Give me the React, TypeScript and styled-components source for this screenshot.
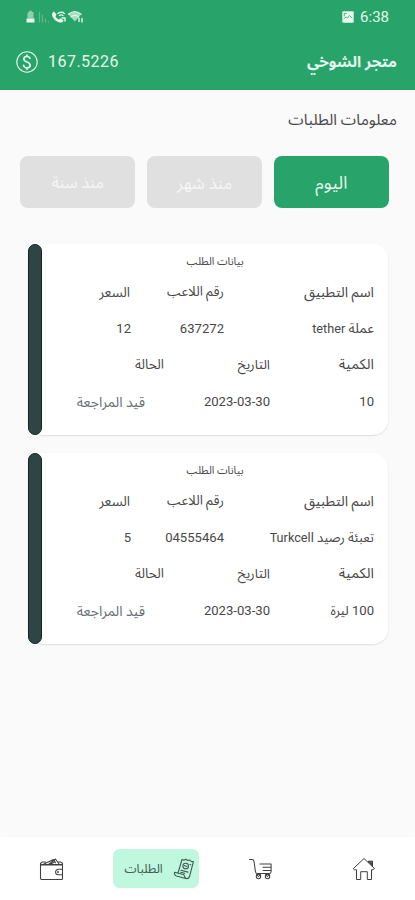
import React from 'react';
import styled, { createGlobalStyle } from 'styled-components';

const Global = createGlobalStyle`
  * { box-sizing: border-box; }
  body { margin: 0; background: #fafafa; }
`;

const Screen = styled.div`
  width: 415px;
  height: 900px;
  display: flex;
  flex-direction: column;
  overflow: hidden;
  background: #fafafa;
  color: #484848;
  font-family: Roboto, "Noto Sans Arabic", sans-serif;
`;

const Header = styled.header`
  height: 90px;
  background: #28a46a;
  color: #e4f7ec;
`;

const StatusBar = styled.div`
  height: 33px;
  display: flex;
  align-items: center;
  justify-content: space-between;
  padding: 0 26px 0 25px;
`;

const StatusGroup = styled.div`
  display: flex;
  align-items: center;
  gap: 6px;
`;

const Clock = styled.span`
  font-size: 15px;
  line-height: 18px;
`;

const AppBar = styled.div`
  height: 57px;
  display: flex;
  align-items: center;
  justify-content: space-between;
  padding: 0 18px 0 15px;
`;

const Balance = styled.div`
  display: flex;
  align-items: center;
  gap: 9px;
  font-size: 16px;
  letter-spacing: 0.48px;
`;

const StoreName = styled.h1`
  margin: 0;
  font-size: 15.3px;
  line-height: 24px;
  font-weight: 700;
`;

const Main = styled.main`
  flex: 1;
  direction: rtl;
`;

const SectionTitle = styled.h2`
  margin: 0;
  height: 66px;
  padding: 15px 18px 0;
  font-size: 15.5px;
  line-height: 30px;
  font-weight: 400;
`;

const Tabs = styled.div`
  display: flex;
  gap: 11.5px;
  padding: 0 26px;
`;

const Tab = styled.button<{ $active?: boolean; $size: number }>`
  flex: none;
  width: 115.3px;
  height: 52px;
  padding: 2px 0 0;
  border: 0;
  border-radius: 8px;
  background: ${(p) => (p.$active ? '#28a46a' : '#e0e0e0')};
  color: ${(p) => (p.$active ? '#e6f7ed' : '#f6f6f6')};
  font-family: inherit;
  font-size: ${(p) => p.$size}px;
`;

const CardList = styled.div`
  display: flex;
  flex-direction: column;
  gap: 18px;
  padding: 36px 27px 0 28px;
`;

const Card = styled.article`
  height: 191px;
  display: flex;
  border-radius: 15px;
  background: #fff;
  box-shadow: 0 1px 2px rgba(0, 0, 0, 0.11);
`;

const CardBody = styled.div`
  flex: 1;
`;

const Stripe = styled.div`
  width: 14px;
  border-radius: 7px;
  border: 1.5px solid #142625;
  background: #2f4543;
`;

const CardTitle = styled.h3`
  margin: 0;
  height: 30px;
  padding-top: 1px;
  font-size: 10.7px;
  line-height: 33px;
  font-weight: 400;
  text-align: center;
`;

const Row = styled.div<{ $columns: string }>`
  display: grid;
  grid-template-columns: ${(p) => p.$columns};
  height: 36.5px;
  padding-right: 14px;
  align-items: center;
`;

const Cell = styled.span<{ $size?: number; $light?: boolean }>`
  white-space: nowrap;
  line-height: 20px;
  font-size: ${(p) => p.$size ?? 13.1}px;
  color: ${(p) => (p.$light ? '#667074' : 'inherit')};
`;

const Latin = styled.span`
  font-size: 12.7px;
`;

const BottomNav = styled.nav`
  height: 63px;
  direction: rtl;
  display: grid;
  grid-template-columns: 103px 103px 107px 102px;
  align-items: center;
  justify-items: center;
  background: #fff;
  box-shadow: 0 -1px 4px rgba(0, 0, 0, 0.01);
`;

const NavItem = styled.a`
  display: flex;
  color: #3f3f3f;
`;

const ActiveItem = styled.a`
  width: 86px;
  height: 39px;
  display: flex;
  align-items: center;
  justify-content: space-between;
  padding: 0 4px 0 12px;
  border-radius: 7px;
  background: #bff7df;
  color: #40594f;
  font-size: 12.2px;
`;

const Icon = styled.svg`
  display: block;
  fill: none;
  stroke: currentColor;
  stroke-linecap: round;
  stroke-linejoin: round;
`;

const StatusIcons = () => (
  <Icon width="60" height="14" viewBox="0 0 60 14">
    <path d="M3 2h1.200V.8h2.600V2H8.500v6.500h-6V4z" fill="#8fcfac" stroke="none" />
    <path d="M1.500 8.500h8v4h-8z" fill="#e9f8ef" stroke="none" />
    <path d="M14.500 2v10M17.500 5v7M20.500 9v3M23.500 11.500v.5" stroke="#5fba8a" strokeWidth="1.200" />
    <path d="M29 1.500l2.500 3-1 1.800c.8 1.700 1.900 2.700 3.500 3.300l1.600-1.400 3 2.300c-.8 1.800-2 2.400-4 1.900-4-1-7.200-4.200-7.500-7.900 0-1.500.8-2.500 1.900-3z" fill="#e9f8ef" stroke="none" />
    <path d="M33 3.500c2-1.600 4.500-1.600 6.500 0M34.500 5.500c1.200-.8 2.400-.8 3.500 0M37 8h3v3" strokeWidth="1.400" />
    <path d="M43.500 4.500c4-3.500 8.500-3.500 12.500 0l-6.200 7z" fill="#a9dcc0" stroke="none" />
    <path d="M43.500 4.300c4-3.300 8.500-3.300 12.500 0M46 6.800c2.500-2 5-2 7.300 0" strokeWidth="1.200" />
    <path d="M54 8v3.500M57 8.500V12" strokeWidth="1.400" />
  </Icon>
);

const PictureIcon = () => (
  <Icon width="12" height="12" viewBox="0 0 12 12">
    <rect x=".3" y=".3" width="11.400" height="11.400" rx="1" fill="#e9f8ef" stroke="none" />
    <path d="M2 7.500l2-1.500 1.500 1L7.500 4.500 10 7M2.300 2.500v2.500M2.300 2.500h2" stroke="#55b685" strokeWidth="1" />
  </Icon>
);

const DollarIcon = () => (
  <Icon width="24" height="24" viewBox="0 0 24 24">
    <circle cx="12" cy="12" r="10.200" strokeWidth="1.100" />
    <path d="M15 8.300c-.5-1.300-1.600-2-3.100-2-1.900 0-3 1-3 2.700 0 3.700 6.300 2.200 6.300 6 0 1.800-1.400 2.900-3.200 2.900s-3-.9-3.400-2.500M12 5v1.300M12 17.900v1.300" strokeWidth="1.700" />
  </Icon>
);

const HomeIcon = () => (
  <Icon width="24" height="24" viewBox="0 0 24 24" strokeWidth="1">
    <path d="M1.500 11.500L12 1.500l10.500 10-1.500 1.300h-1.500v9.700h-4.200v-7.800H8.700v7.800H4.500v-9.700H3z" />
    <path d="M16.500 5.500V4.200h4v5.300" />
    <path d="M17.200 4.500l3 3.500M20 4.500v4" strokeWidth="1.400" />
  </Icon>
);

const CartIcon = () => (
  <Icon width="25" height="24" viewBox="0 0 25 24" strokeWidth="1.050">
    <path d="M1.500 2.500h2.300c1.200 0 2 .7 2.200 1.800L7.500 15c.2 1 .8 1.500 1.800 1.500h12c1 0 1.700-.7 1.800-1.700V7H12M15 10.300h8M15 13.500h8" />
    <circle cx="10.500" cy="19.500" r="2.200" />
    <circle cx="19.500" cy="19.500" r="2.200" />
    <path d="M8.500 17.500l2 2 2-2M17.500 17.500l2 2 2-2" />
  </Icon>
);

const WalletIcon = () => (
  <Icon width="25" height="24" viewBox="0 0 25 24" strokeWidth="1.050">
    <rect x="1.500" y="7.500" width="22" height="15" rx="1" />
    <path d="M1.500 8V6.200l2-1.200h3M23.500 8V6.200l-2-1.200h-2M4.500 7.300L14.500 2.500l2 3.300M9.500 7.500l7-5.500 3.500 5M12 7l4-2.500" />
    <path d="M23.500 12.300h-4.200a2.700 2.700 0 0 0 0 5.400h4.200" />
    <path d="M2 7.700h21M19 14.500v1" strokeWidth="1.500" />
  </Icon>
);

const ReceiptIcon = () => (
  <Icon width="22" height="24" viewBox="0 0 22 24" strokeWidth="1.100">
    <path d="M9 2.500l1.900.8 1.900-1.100 1.900 1.300 2.100-.5 1.300 1.400 2.300.2-3.700 14.200c-.5 2-1.800 3.200-3.900 2.700L3.500 19c-1.600-.5-2.400-2-1.900-3.800l9.400 2.600c.2 1.800.9 2.900 2 3.500M5 16L9 2.500" />
    <circle cx="12.700" cy="9" r="2.800" />
    <path d="M11.500 8.500l2.300 1M8 13.300l7 1.800M7.700 15.200l4 1M17 7.500l.8.300" />
  </Icon>
);

interface Order {
  app: React.ReactNode;
  appSize: number;
  player: string;
  price: string;
  amount: React.ReactNode;
  date: string;
}

const orders: Order[] = [
  { app: <>عملة <Latin>tether</Latin></>, appSize: 13.6, player: '637272', price: '12', amount: '10', date: '2023-03-30' },
  { app: <>تعبئة رصيد <Latin>Turkcell</Latin></>, appSize: 13, player: '04555464', price: '5', amount: '100 ليرة', date: '2023-03-30' },
];

const OrderCard = ({ order }: { order: Order }) => (
  <Card>
    <CardBody>
      <CardTitle>بيانات الطلب</CardTitle>
      <Row $columns="150px 94px 1fr">
        <Cell $size={14.2}>اسم التطبيق</Cell>
        <Cell $size={13.3}>رقم اللاعب</Cell>
        <Cell $size={13.6}>السعر</Cell>
      </Row>
      <Row $columns="150px 93px 1fr">
        <Cell $size={order.appSize}>{order.app}</Cell>
        <Cell>{order.player}</Cell>
        <Cell>{order.price}</Cell>
      </Row>
      <Row $columns="104px 106px 1fr">
        <Cell $size={14.4}>الكمية</Cell>
        <Cell $size={13.2}>التاريخ</Cell>
        <Cell $size={13.4}>الحالة</Cell>
      </Row>
      <Row $columns="104px 125px 1fr">
        <Cell>{order.amount}</Cell>
        <Cell>{order.date}</Cell>
        <Cell $size={14} $light>قيد المراجعة</Cell>
      </Row>
    </CardBody>
    <Stripe />
  </Card>
);

export default function App() {
  return (
    <Screen>
      <Global />
      <Header>
        <StatusBar>
          <StatusIcons />
          <StatusGroup>
            <PictureIcon />
            <Clock>6:38</Clock>
          </StatusGroup>
        </StatusBar>
        <AppBar>
          <Balance>
            <DollarIcon />
            167.5226
          </Balance>
          <StoreName dir="rtl">متجر الشوخي</StoreName>
        </AppBar>
      </Header>
      <Main>
        <SectionTitle>معلومات الطلبات</SectionTitle>
        <Tabs>
          <Tab $active $size={17.5}>اليوم</Tab>
          <Tab $size={16.6}>منذ شهر</Tab>
          <Tab $size={16}>منذ سنة</Tab>
        </Tabs>
        <CardList>
          {orders.map((order) => (
            <OrderCard key={order.player} order={order} />
          ))}
        </CardList>
      </Main>
      <BottomNav>
        <NavItem><HomeIcon /></NavItem>
        <NavItem><CartIcon /></NavItem>
        <ActiveItem>
          <ReceiptIcon />
          الطلبات
        </ActiveItem>
        <NavItem><WalletIcon /></NavItem>
      </BottomNav>
    </Screen>
  );
}
